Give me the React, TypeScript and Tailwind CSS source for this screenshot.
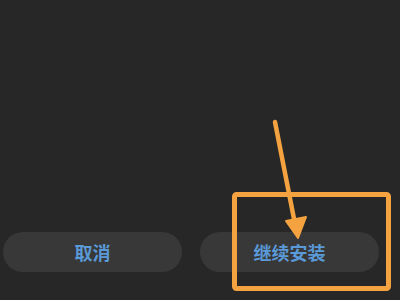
export default function App() {
  return (
    <div
      className="relative flex h-[300px] w-[400px] flex-col justify-end overflow-hidden bg-[#272727] pb-[28px] pl-[3px]"
      style={{ fontFamily: '"Noto Sans CJK SC", "Noto Sans", sans-serif' }}
    >
      <div className="flex gap-[18px]">
        <button className="flex h-[40px] w-[179px] items-center justify-center rounded-full bg-[#383838] text-[18px] font-bold text-[#5a9ad8]">
          取消
        </button>
        <button className="flex h-[40px] w-[179px] items-center justify-center rounded-full bg-[#383838] text-[18px] font-bold text-[#5a9ad8]">
          继续安装
        </button>
      </div>

      <svg className="pointer-events-none absolute left-0 top-0" width="400" height="300" viewBox="0 0 400 300">
        <rect x="234.5" y="194.5" width="154" height="94" rx="2" fill="none" stroke="#f4a340" strokeWidth="5" />
        <line x1="275" y1="122" x2="295" y2="224" stroke="#f4a340" strokeWidth="4.5" strokeLinecap="round" />
        <polygon points="286,221 306,217 298,238" fill="#f4a340" stroke="#f4a340" strokeWidth="2" strokeLinejoin="round" />
      </svg>
    </div>
  );
}
